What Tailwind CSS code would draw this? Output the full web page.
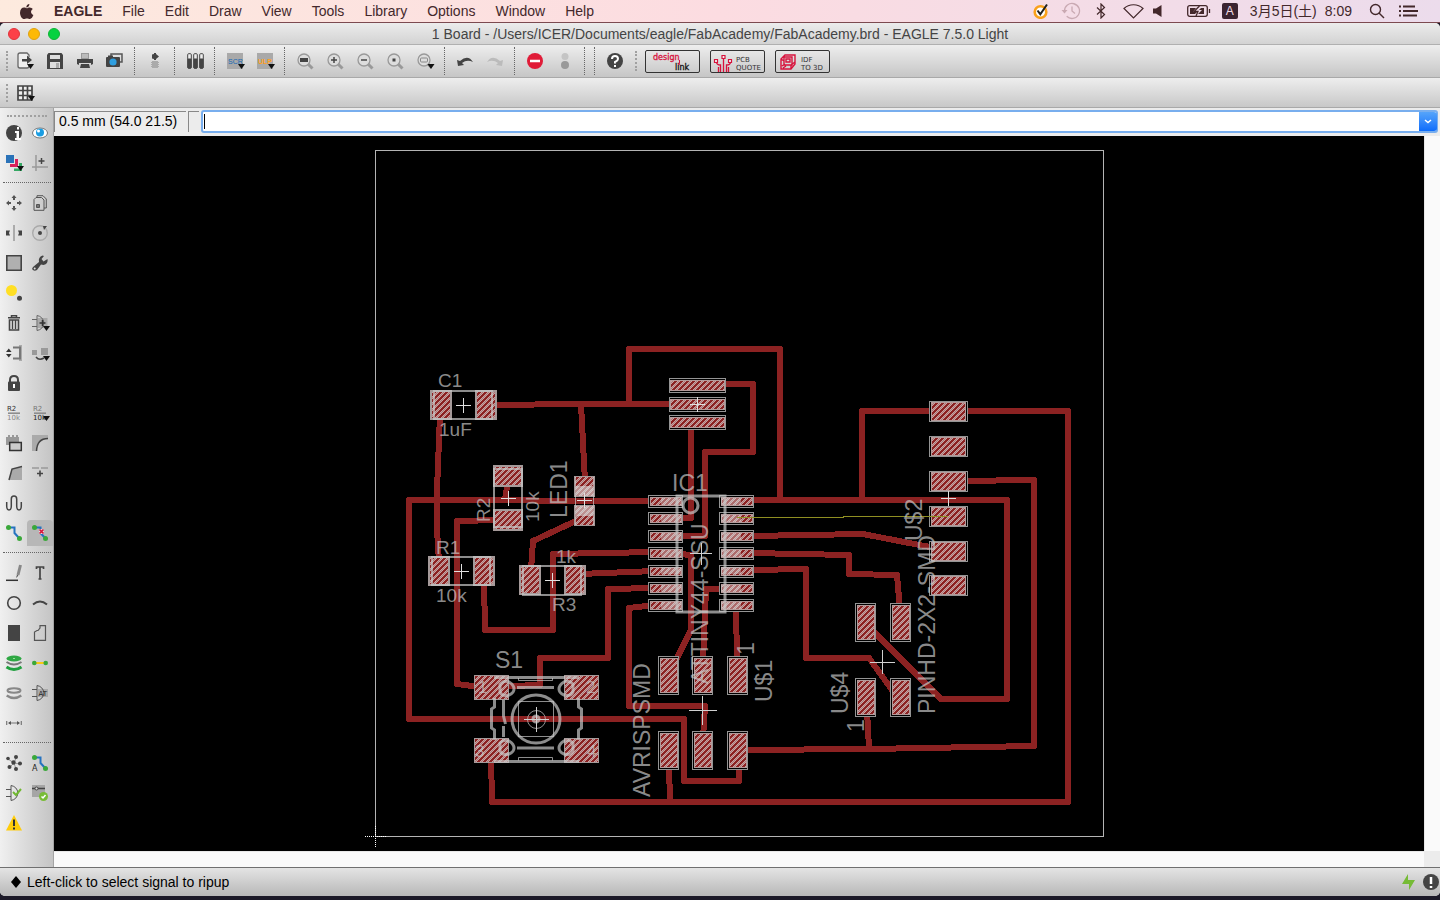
<!DOCTYPE html>
<html lang="en">
<head>
    <meta charset="UTF-8">
    <meta name="viewport" content="width=device-width, initial-scale=1.0">
    <title>1 Board - FabAcademy.brd - EAGLE 7.5.0 Light</title>
    <script src="https://cdn.jsdelivr.net/npm/@tailwindcss/browser@4"></script>
</head>
<body class="h-screen flex flex-col overflow-hidden bg-[#1c1a28] font-['Liberation_Sans','Noto_Sans_CJK_JP',sans-serif] text-black">

    <!-- Menu bar -->
    <header class="h-[23px] shrink-0 flex items-center justify-between border-b border-[#7c4a50] bg-linear-to-r from-[#fdeade] via-[#fcdce1] to-[#ecdcec] text-sm text-[#43282b] whitespace-nowrap">
        <nav class="flex items-center gap-5 pl-[19px]" aria-label="Menu bar">
            <a href="#" aria-label="Apple"><svg class="w-[15px] h-[17px]" viewBox="0 0 15 17" fill="currentColor"><path d="M10.4 1c.1 1.900-1.400 3.400-3.100 3.500C7.100 2.700 8.700 1.100 10.400 1zM7.700 5.300c.6 0 1.500-.8 2.900-.8 1.500 0 2.600.8 3.200 1.600-2.600 1.600-2.100 5 .6 6-.6 1.700-2 4-3.500 4-1.200 0-1.500-.7-2.900-.7s-1.900.7-3 .7C3.200 16.100 1 12.900 1 9.700c0-3.200 2-5.100 4-5.100 1.300 0 2.100.7 2.700.7z"/></svg></a>
            <a href="#" class="font-bold">EAGLE</a>
            <a href="#">File</a>
            <a href="#">Edit</a>
            <a href="#">Draw</a>
            <a href="#">View</a>
            <a href="#">Tools</a>
            <a href="#">Library</a>
            <a href="#">Options</a>
            <a href="#">Window</a>
            <a href="#">Help</a>
        </nav>
        <div class="flex items-center pr-[22px]">
            <svg class="w-4 h-4 mr-3" viewBox="0 0 16 16" fill="none"><circle cx="7.5" cy="9" r="5.8" fill="#fff" stroke="#f9a11b" stroke-width="2.6"/><path d="M4.5 7.5l2.800 3.700L14 1.500" stroke="#222" stroke-width="2"/></svg>
            <svg class="w-5 h-5 mr-[15px]" viewBox="0 0 20 20" fill="none" stroke="#c9a9b2" stroke-width="1.3"><path d="M3.5 10a7.500 7.500 0 1 1 2.200 5.300M11 5.500V10l3 2.500"/><path d="M.5 9h6L3.500 12.500z" fill="#c9a9b2" stroke="none"/></svg>
            <svg class="w-[10px] h-4 mr-[17px]" viewBox="0 0 10 16" fill="none" stroke="currentColor" stroke-width="1.2"><path d="M1 4.500l7.500 7L5 15V1l3.500 3.500L1 11.500"/></svg>
            <svg class="w-[21px] h-4 mr-[9px]" viewBox="0 0 21 16" fill="none" stroke="currentColor" stroke-width="1.2"><path d="M1 5.500C6 .5 15 .5 20 5.500L10.500 15z"/></svg>
            <svg class="w-[10px] h-3 mr-6" viewBox="0 0 10 12" fill="currentColor"><path d="M0 3.500h3L8.500 0v12L3 8.500H0z"/></svg>
            <svg class="w-6 h-3 mr-[11px]" viewBox="0 0 24 12" fill="none" stroke="currentColor"><rect x=".7" y=".7" width="19.6" height="10.6" rx="2" stroke-width="1.3"/><path d="M3 3h6L6 7h4l-2 2H3zM14 3h3v6h-6l4-4h-3z" fill="currentColor" stroke="none"/><path d="M12.5 1L7 6.500h4L9 11M22.500 4v4" stroke-width="1.3"/></svg>
            <span class="w-4 h-4 mr-3 rounded-[2px] bg-[#3b2430] text-[#f2dce4] text-xs leading-4 text-center">A</span>
            <span class="mr-2">3月5日(土)</span>
            <span class="mr-[17px]">8:09</span>
            <svg class="w-4 h-4 mr-[14px]" viewBox="0 0 16 16" fill="none" stroke="currentColor" stroke-width="1.4"><circle cx="6.5" cy="6.5" r="5"/><path d="M10 10l5 5"/></svg>
            <svg class="w-[19px] h-3" viewBox="0 0 19 12" stroke="currentColor" stroke-width="2"><path d="M0 1.500h2M0 6h2M0 10.500h2M4 1.500h12M4 6h15M4 10.500h14"/></svg>
        </div>
    </header>

    <div class="flex-1 min-h-0 flex flex-col rounded-t-[5px] rounded-b-[5px] overflow-hidden mb-1 bg-[#ececec]">
        <!-- Title bar -->
        <div class="h-[22px] shrink-0 relative flex items-center pl-2 gap-2 border-b border-[#b0b0b0] bg-linear-to-b from-[#ececec] to-[#d3d3d3]">
            <button aria-label="Close" class="w-3 h-3 rounded-full bg-[#fc4048] border border-[#e0343c]"></button>
            <button aria-label="Minimize" class="w-3 h-3 rounded-full bg-[#fdb905] border border-[#dfa012]"></button>
            <button aria-label="Zoom" class="w-3 h-3 rounded-full bg-[#06d240] border border-[#10b335]"></button>
            <h1 class="absolute inset-x-0 text-center text-sm leading-5 text-[#444] pointer-events-none">1 Board - /Users/ICER/Documents/eagle/FabAcademy/FabAcademy.brd - EAGLE 7.5.0 Light</h1>
        </div>

        <!-- Main toolbar -->
        <div class="h-[33px] shrink-0 flex items-center pl-[6px] border-b border-[#a9a9a9] bg-linear-to-b from-[#eeeeee] to-[#c6c6c6] [&>button]:flex [&>button]:items-center [&>button]:justify-center [&>button]:h-full [&>button]:w-[30px] [&>hr]:ml-[4px] [&>hr]:mr-[5px] [&>hr]:w-0 [&>hr]:h-[28px] [&>hr]:border-0 [&>hr]:border-l [&>hr]:border-dotted [&>hr]:border-[#666] [&_svg]:overflow-visible">
            <span class="w-1 h-[20px] border-l-2 border-dotted border-[#a0a0a0]"></span>
            <button aria-label="Open"><svg width="18" height="18" viewBox="0 0 18 18" fill="none"><path d="M13 5V3L11 1H4Q2 1 2 3v11q0 2 2 2h7q2 0 2-2v-2" stroke="#666" stroke-width="1.3" fill="#eee"/><path d="M6 7h5V3.500L16 8l-5 4V9.500H6z" fill="#444"/><path d="M11 12h7l-3.500 5z" fill="#111"/></svg></button>
            <button aria-label="Save"><svg width="16" height="16" viewBox="0 0 16 16"><path d="M1.500 0h13L16 2v14H0V2z" fill="#444"/><path d="M3 2h10v4H3zM3 9h10v6H3z" fill="#ddd"/><path d="M9 10h3v5H9z" fill="#aaa"/></svg></button>
            <button aria-label="Print"><svg width="16" height="16" viewBox="0 0 16 16"><path d="M4 0h8v6H4z" fill="#999"/><path d="M5 2h6M5 4h6" stroke="#ddd"/><path d="M0 6h16v5l-2 1v-2H2v2l-2-1z" fill="#444"/><path d="M4 11h8l1 4H3z" fill="#444"/></svg></button>
            <button aria-label="CAM processor"><svg width="18" height="16" viewBox="0 0 18 16"><path d="M5 3V1h11v8h-2" fill="none" stroke="#555" stroke-width="1.5"/><rect x="0" y="4" width="14" height="10" rx="1" fill="#444"/><path d="M2 2.500h5V5H2z" fill="#444"/><circle cx="7" cy="9" r="3.6" fill="#2f9fe0"/></svg></button>
            <hr>
            <button aria-label="Schematic"><svg width="10" height="16" viewBox="0 0 10 16"><path d="M4 0h2v1l3 2.500L6 6v1H4V6L2 5.500v-4L4 1z" fill="#444"/><path d="M2 8h6v1h1v1H8v1h1v1H8v1h1v1H8v1H2v-1H1v-1h1v-1H1v-1h1v-1H1V9h1z" fill="#aaa"/></svg></button>
            <hr>
            <button aria-label="Use library"><svg width="17" height="16" viewBox="0 0 17 16" fill="#eee" stroke="#444"><rect x=".7" y=".7" width="3.6" height="14.6" rx="1"/><rect x="6.7" y=".7" width="3.6" height="14.6" rx="1"/><rect x="12.7" y=".7" width="3.6" height="14.6" rx="1"/><path d="M1 6h3v9H1zM7 6h3v9H7zM13 6h3v9h-3z" fill="#444"/></svg></button>
            <hr>
            <button aria-label="Execute script"><svg width="17" height="16" viewBox="0 0 17 16"><path d="M0 0h16v16H0z" fill="#a9a9a9"/><text x="1" y="11" font-family="Liberation Sans" font-size="7" fill="#1468b4">SCR</text><path d="M11 11h7l-3.500 5z" fill="#111"/></svg></button>
            <button aria-label="Run ULP"><svg width="17" height="16" viewBox="0 0 17 16"><path d="M0 0h16v16H0z" fill="#a9a9a9"/><text x="1" y="11" font-family="Liberation Sans" font-size="7" font-weight="bold" fill="#ffa01c">ULP</text><path d="M11 11h7l-3.500 5z" fill="#111"/></svg></button>
            <hr>
            <button aria-label="Zoom to fit"><svg width="16" height="16" viewBox="0 0 16 16" fill="none"><path d="M10.500 10.500l5 5" stroke="#999" stroke-width="3"/><circle cx="7" cy="7" r="6" fill="#ddd" stroke="#999" stroke-width="1.3"/><path d="M3 5h8v4H3z" fill="#444"/></svg></button>
            <button aria-label="Zoom in"><svg width="16" height="16" viewBox="0 0 16 16" fill="none"><path d="M10.500 10.500l5 5" stroke="#999" stroke-width="3"/><circle cx="7" cy="7" r="6" fill="#ddd" stroke="#999" stroke-width="1.3"/><path d="M7 4v6M4 7h6" stroke="#444" stroke-width="1.5"/></svg></button>
            <button aria-label="Zoom out"><svg width="16" height="16" viewBox="0 0 16 16" fill="none"><path d="M10.500 10.500l5 5" stroke="#999" stroke-width="3"/><circle cx="7" cy="7" r="6" fill="#ddd" stroke="#999" stroke-width="1.3"/><path d="M4 7h6" stroke="#444" stroke-width="1.5"/></svg></button>
            <button aria-label="Redraw"><svg width="16" height="16" viewBox="0 0 16 16" fill="none"><path d="M10.500 10.500l5 5" stroke="#999" stroke-width="3"/><circle cx="7" cy="7" r="6" fill="#ddd" stroke="#999" stroke-width="1.3"/><path d="M5.500 5.500h3v3h-3z" fill="#444"/></svg></button>
            <button aria-label="Zoom select"><svg width="16" height="16" viewBox="0 0 16 16" fill="none"><path d="M10.500 10.500l4 4" stroke="#999" stroke-width="3"/><circle cx="7" cy="7" r="6" fill="#ddd" stroke="#999" stroke-width="1.3"/><rect x="3.5" y="5" width="7" height="4" rx="1" stroke="#888"/><path d="M10.500 11h7L14 16z" fill="#111"/></svg></button>
            <hr>
            <button aria-label="Undo"><svg width="16" height="12" viewBox="0 0 16 12"><path d="M0 5l1 6 6-1-2-2q5-4 11-1Q11-1 3 6z" fill="#444"/></svg></button>
            <button aria-label="Redo"><svg width="16" height="12" viewBox="0 0 16 12"><path d="M16 5l-1 6-6-1 2-2Q6 4 0 7 5-1 13 6z" fill="#bbb"/></svg></button>
            <hr>
            <button aria-label="Stop"><svg width="16" height="16" viewBox="0 0 16 16"><circle cx="8" cy="8" r="8" fill="#e01c38"/><path d="M3 6.700h10v2.600H3z" fill="#fff"/></svg></button>
            <button aria-label="Go"><svg width="8" height="16" viewBox="0 0 8 16"><circle cx="4" cy="3.5" r="3.5" fill="#c4c4c4"/><circle cx="4" cy="12" r="4" fill="#999"/></svg></button>
            <hr>
            <hr>
            <button aria-label="Help"><svg width="16" height="16" viewBox="0 0 16 16"><circle cx="8" cy="8" r="8" fill="#444"/><path d="M5 6q0-3 3-3t3 3q0 1.500-3 3v1.500M8 12v2" fill="none" stroke="#fff" stroke-width="2"/></svg></button>
            <span class="w-1 h-[20px] ml-[5px] mr-[6px] border-l-2 border-dotted border-[#a0a0a0]"></span>
            <div class="flex gap-[10px] [&>button]:w-[55px] [&>button]:h-[23px] [&>button]:border [&>button]:border-[#333] [&>button]:rounded-[2px]">
                <button aria-label="Design link"><svg width="53" height="21" viewBox="0 0 53 21" font-family="DejaVu Sans" font-size="8"><text x="7" y="9" fill="#d8123c" stroke="#d8123c" stroke-width=".3">design</text><text x="29" y="19" fill="#111" stroke="#111" stroke-width=".3">link</text><path d="M33.500 9v3" stroke="#d8123c"/><circle cx="33" cy="13" r="1" fill="#d8123c"/></svg></button>
                <button aria-label="PCB quote"><svg width="53" height="21" viewBox="0 0 53 21" font-family="DejaVu Sans" font-size="7" fill="#333"><path d="M12.500 8v13M9.500 21v-7q-4 0-4-3M15.500 21v-7q4 0 4-3M7.500 21v-5M17.500 21v-5" fill="none" stroke="#d8123c" stroke-width="1.3"/><path d="M3.500 8.500h3v3h-3zM11 4.500h3v3h-3zM17.500 8.500h3v3h-3z" fill="#eee" stroke="#d8123c" stroke-width="1.2"/><text x="25" y="11">PCB</text><text x="25" y="19">QUOTE</text></svg></button>
                <button aria-label="IDF to 3D"><svg width="53" height="21" viewBox="0 0 53 21" font-family="DejaVu Sans" font-size="7" fill="#333"><path d="M5 8l4-4h10v9l-4 5H5zM5 8l3 2M8 6h8v8H8zM10 8h4v3h-4zM6 15l3-2M7 17l3-2M15 18v-4l4-3" fill="none" stroke="#d8123c" stroke-width="1.4"/><text x="25" y="11">IDF</text><text x="25" y="19">TO 3D</text></svg></button>
            </div>
        </div>

        <!-- Parameter toolbar -->
        <div class="h-[30px] shrink-0 flex items-center pl-[6px] border-b border-[#a9a9a9] bg-linear-to-b from-[#eeeeee] to-[#c8c8c8]">
            <span class="w-1 h-[18px] border-l-2 border-dotted border-[#a0a0a0]"></span>
            <button aria-label="Grid" class="w-[31px] flex justify-center"><svg width="18" height="16" viewBox="0 0 18 16"><path d="M1 1h14v14H1zM6 1v14M10.500 1v14M1 5.500h14M1 10.500h14" fill="#eee" stroke="#444" stroke-width="1.7"/><path d="M11 11h7l-3.500 5z" fill="#111"/></svg></button>
        </div>

        <div class="flex-1 min-h-0 flex">
            <!-- Command buttons -->
            <aside class="w-[54px] shrink-0 pl-px pt-[7px] border-r border-[#a4a4a4] bg-linear-to-r from-[#f0f0f0] to-[#c4c4c4] [&>div]:grid [&>div]:grid-cols-2 [&_button]:flex [&_button]:items-center [&_button]:justify-center [&_button]:h-[30px] [&>hr]:mx-[2px] [&>hr]:mt-[4px] [&>hr]:mb-[5px] [&>hr]:border-0 [&>hr]:border-t [&>hr]:border-dotted [&>hr]:border-[#666] [&_svg]:overflow-visible [&_svg]:w-4 [&_svg]:h-4">
                <span class="block mx-[6px] h-[3px] border-t-2 border-dotted border-[#a0a0a0]"></span>
                <div>
                    <button aria-label="Info"><svg viewBox="0 0 16 16"><circle cx="8" cy="8" r="8" fill="#444"/><path d="M11 2h2v2.500h-2zM9 6h4v7h2v2H9v-2h1.500V8H9z" fill="#fff"/></svg></button>
                    <button aria-label="Show"><svg viewBox="0 0 16 16"><ellipse cx="8" cy="8" rx="7.5" ry="5" fill="#fff" stroke="#777"/><circle cx="8" cy="7.5" r="4" fill="#1b9de2"/><circle cx="6.5" cy="6" r="1.5" fill="#fff"/></svg></button>
                    <button aria-label="Display"><svg viewBox="0 0 16 16"><path d="M0 0h8v8H0z" fill="#2a72b8"/><path d="M12 4v8H4V9h5V4z" fill="#d8205a"/><path d="M16 8v8H8v-2.500h5V8z" fill="#35a864"/><path d="M11 11h7l-3.500 5z" fill="#111"/></svg></button>
                    <button aria-label="Mark"><svg viewBox="0 0 16 16"><path d="M4 0v16M0 12h16" stroke="#999" stroke-width="1.5"/><path d="M9.500 3v6M6.500 6h6" stroke="#444" stroke-width="1.5"/></svg></button>
                </div>
                <hr>
                <div>
                    <button aria-label="Move"><svg viewBox="0 0 16 16" fill="#555"><path d="M8 0l2.500 3H9v2H7V3H5.500zM8 16l-2.500-3H7v-2h2v2h1.500zM0 8l3-2.500V7h2v2H3v1.500zM16 8l-3-2.500V7h-2v2h2v1.500z"/></svg></button>
                    <button aria-label="Copy"><svg viewBox="0 0 16 16" fill="none" stroke="#555"><path d="M5 2V.7h6L14.300 4v9H12"/><path d="M4 2.500h5.500L12 5v10.300H2V4.500z"/><path d="M4.500 9.500h3v3h-3z" fill="#777"/></svg></button>
                    <button aria-label="Mirror"><svg viewBox="0 0 16 16"><path d="M8 0v16" stroke="#999" stroke-width="1.5"/><path d="M0 5.500h4L3 8l1 2.500H0zM16 5.500h-4L13 8l-1 2.500h4z" fill="#444"/></svg></button>
                    <button aria-label="Rotate"><svg viewBox="0 0 16 16"><circle cx="8" cy="8" r="7.3" fill="none" stroke="#aaa" stroke-width="1.4"/><circle cx="8" cy="8" r="2" fill="#444"/><path d="M11 1h4l-3 4z" fill="#444"/></svg></button>
                    <button aria-label="Group"><svg viewBox="0 0 16 16"><path d="M.8.800h14.400v14.400H.8z" fill="#b0b0b0" stroke="#444" stroke-width="1.6"/></svg></button>
                    <button aria-label="Change"><svg viewBox="0 0 16 16"><path d="M1 12l6-5Q6 2 10.500.5L12 1 9.500 4l2 2.500L15.500 4q1 5-4 6L9 9.500 5 15q-3 2-5-1z" fill="#444"/><circle cx="2.7" cy="13.4" r="1" fill="#ddd"/></svg></button>
                    <button aria-label="Paste"><svg viewBox="0 0 16 16"><circle cx="5.5" cy="5.5" r="5.5" fill="#ffdf25"/><circle cx="13.5" cy="13.3" r="2.5" fill="#444"/></svg></button>
                    <span></span>
                    <button aria-label="Delete"><svg viewBox="0 0 16 16" fill="none" stroke="#444"><path d="M5.500 2V.7h5V2M2 2.700h12" stroke-width="1.5"/><path d="M3.500 5v10h9V5z" stroke-width="1.6"/><path d="M6.500 5v9M9.500 5v9" stroke-width="1.4"/></svg></button>
                    <button aria-label="Add"><svg viewBox="0 0 16 16" fill="none"><path d="M5.500 3h10v10h-10z" fill="#aaa"/><path d="M0 4.500h5M0 11.500h5M5 .5v15Q11 14.500 12 8 11 1.500 5 .5" stroke="#666"/><path d="M10.500 5v6M7.500 8h6" stroke="#333" stroke-width="1.5"/><path d="M11 11h7l-3.500 5z" fill="#111"/></svg></button>
                    <button aria-label="Pinswap"><svg viewBox="0 0 16 16"><path d="M0 7l2.800-3.500L5.600 7zM0 9l2.800 3.500L5.600 9z" fill="#333"/><path d="M13 0h3v16h-3z" fill="#aaa"/><path d="M7 2.500h7v11H7" fill="none" stroke="#777" stroke-width="2"/></svg></button>
                    <button aria-label="Replace"><svg viewBox="0 0 16 16"><path d="M0 5h5v5H0zM9 3h7v7H9z" fill="#999"/><path d="M4 12q3 4 8 1" fill="none" stroke="#444" stroke-width="1.5"/><path d="M11 11h7l-3.500 5z" fill="#111"/></svg></button>
                    <button aria-label="Lock"><svg viewBox="0 0 16 16"><path d="M4 8V5q0-4 4-4t4 4v3" fill="none" stroke="#444" stroke-width="2"/><rect x="2" y="6.5" width="12" height="9.5" rx="1" fill="#444"/><path d="M7 9h2v4H7z" fill="#fff"/></svg></button>
                    <span></span>
                    <button aria-label="Name"><svg viewBox="0 0 16 16" font-family="DejaVu Sans" font-size="7"><text x="1" y="6" fill="#333">R2</text><path d="M2 8.200h12" stroke="#888" stroke-width="1.5"/><text x="1" y="15" fill="#888">10k</text></svg></button>
                    <button aria-label="Value"><svg viewBox="0 0 16 16" font-family="DejaVu Sans" font-size="7"><text x="1" y="6" fill="#777">R2</text><path d="M2 8.200h12" stroke="#888" stroke-width="1.5"/><text x="1" y="15" fill="#222">10k</text><path d="M11 11h7l-3.500 5z" fill="#111"/></svg></button>
                    <button aria-label="Smash"><svg viewBox="0 0 16 16"><path d="M0 2h2V0h2v2h2V0h2v2h2V0h2v2h1v8H0z" fill="#999"/><path d="M3.700 7.500h11.600v8H3.700z" fill="#ccc" stroke="#333" stroke-width="1.5"/></svg></button>
                    <button aria-label="Miter"><svg viewBox="0 0 16 16"><path d="M0 0h16v3Q4 4 4 16H0z" fill="#aaa"/><path d="M16 3.500Q5 3.500 4.500 16" fill="none" stroke="#444" stroke-width="1.5"/></svg></button>
                    <button aria-label="Split"><svg viewBox="0 0 16 16"><path d="M6 4l10-2v13H3z" fill="#aaa"/><path d="M16 1.500L6 4 3 15" fill="none" stroke="#444" stroke-width="1.5"/></svg></button>
                    <button aria-label="Optimize"><svg viewBox="0 0 16 16"><path d="M0 3h7M9 3h7" stroke="#999" stroke-width="1.5"/><path d="M8 5.500v6M5 8.500h6" stroke="#444" stroke-width="1.6"/></svg></button>
                    <button aria-label="Meander"><svg viewBox="0 0 16 16"><path d="M.7 7v4q0 4 2.300 4t2.300-4V4Q5.300 1 8 1t2.700 3v7q0 4 2.300 4t2.300-4V7" fill="none" stroke="#444" stroke-width="1.5"/></svg></button>
                    <span></span>
                    <button aria-label="Route"><svg viewBox="0 0 16 16"><path d="M2 2.500h6.500V8l5.500 6" fill="none" stroke="#2573c0" stroke-width="2"/><circle cx="2.5" cy="2.5" r="2.5" fill="#3aa83a"/><circle cx="13.5" cy="13.5" r="2.5" fill="#3aa83a"/></svg></button>
                    <button aria-label="Ripup" aria-pressed="true" class="my-[2px] h-[26px]! bg-[#b7b7b7] rounded-t-[4px]"><svg viewBox="0 0 16 16"><path d="M2 2.500h6.500V8l5.500 6" fill="none" stroke="#2573c0" stroke-width="2"/><circle cx="2.5" cy="2.5" r="2.5" fill="#3aa83a"/><circle cx="13.5" cy="13.5" r="2.5" fill="#3aa83a"/><path d="M7 4h5v5H7z" fill="#ddd"/><path d="M7.500 4.500l4 4M11.500 4.500l-4 4" stroke="#d8123c" stroke-width="1.7"/></svg></button>
                </div>
                <hr>
                <div>
                    <button aria-label="Line"><svg viewBox="0 0 16 16"><path d="M0 15.300h12" stroke="#333" stroke-width="1.5"/><path d="M14.500 0L12 10" stroke="#888" stroke-width="3"/><path d="M10 13l1-3 1.500.5z" fill="#444"/></svg></button>
                    <button aria-label="Text"><svg viewBox="0 0 16 16"><path d="M4.500 4V2h7v2M8 2v12M6.500 14h3" fill="none" stroke="#444" stroke-width="1.7"/></svg></button>
                    <button aria-label="Circle"><svg viewBox="0 0 16 16"><circle cx="8" cy="8" r="6.3" fill="none" stroke="#444" stroke-width="1.6"/></svg></button>
                    <button aria-label="Arc"><svg viewBox="0 0 16 16"><path d="M1 9.500q7-6 14 0" fill="none" stroke="#444" stroke-width="2"/></svg></button>
                    <button aria-label="Rect"><svg viewBox="0 0 16 16"><path d="M2 0h12v16H2z" fill="#444"/></svg></button>
                    <button aria-label="Polygon"><svg viewBox="0 0 16 16"><path d="M8 .7h5.500v14.600h-11V7L5 5.500h1L8 3z" fill="none" stroke="#555" stroke-width="1.2"/></svg></button>
                    <button aria-label="Via"><svg viewBox="0 0 16 16" fill="none"><path d="M.5 12q7.500 5 15 0" stroke="#22a040" stroke-width="3"/><path d="M.5 7q7.500 5 15 0" stroke="#777" stroke-width="2"/><ellipse cx="8" cy="3.5" rx="7.5" ry="3" fill="#2fa844"/><path d="M7 3.500h2" stroke="#9d9"/></svg></button>
                    <button aria-label="Signal"><svg viewBox="0 0 16 16"><path d="M2 8h12" stroke="#f8c815" stroke-width="2"/><circle cx="2.3" cy="8" r="2.3" fill="#3aa83a"/><circle cx="13.7" cy="8" r="2.3" fill="#3aa83a"/></svg></button>
                    <button aria-label="Hole"><svg viewBox="0 0 16 16" fill="none"><path d="M.7 10.500q7.300 5 14.600 0" stroke="#888" stroke-width="2.5"/><ellipse cx="8" cy="5.5" rx="6.5" ry="2.2" stroke="#888" stroke-width="2"/></svg></button>
                    <button aria-label="Attribute"><svg viewBox="0 0 16 16"><path d="M6 4h10v8H6z" fill="#aaa"/><path d="M0 4.500h5M0 11.500h5M5 .5v15Q11 14.500 12 8 11 1.500 5 .5" stroke="#555" fill="none"/><text x="6.5" y="11" font-family="DejaVu Sans" font-size="7" fill="#222">AT</text></svg></button>
                    <button aria-label="Dimension"><svg viewBox="0 0 16 16"><path d="M.7 6v4M15.300 6v4M3 8h10" stroke="#777" stroke-width="1.2"/><path d="M2 8l3-2v4zM14 8l-3-2v4z" fill="#555"/></svg></button>
                    <span></span>
                </div>
                <hr>
                <div>
                    <button aria-label="Ratsnest"><svg viewBox="0 0 16 16"><path d="M2 4l6 4 2-5M4 12l4-4 6 1M8 8l2 6" stroke="#999" fill="none"/><g fill="#444"><circle cx="2" cy="3.5" r="1.8"/><circle cx="10" cy="2" r="2"/><circle cx="7.5" cy="7.5" r="2.2"/><circle cx="14" cy="8.5" r="2"/><circle cx="3.5" cy="12" r="2"/><circle cx="10" cy="14" r="2"/></g></svg></button>
                    <button aria-label="Autorouter"><svg viewBox="0 0 16 16"><path d="M2 2.500h6.500V8l5.500 6" fill="none" stroke="#2573c0" stroke-width="2"/><circle cx="2.5" cy="2.5" r="2.5" fill="#3aa83a"/><circle cx="13.5" cy="13.5" r="2.5" fill="#3aa83a"/><text x="0" y="16" font-family="DejaVu Sans" font-size="8" fill="#222">A</text></svg></button>
                    <button aria-label="ERC"><svg viewBox="0 0 16 16" fill="none"><path d="M0 4.500h5M0 11.500h5M5 .5v15Q11 14.500 12 8 11 1.500 5 .5" stroke="#555"/><path d="M7 7l3 3 5-6" stroke="#70b830" stroke-width="2"/></svg></button>
                    <button aria-label="DRC"><svg viewBox="0 0 16 16" fill="none"><path d="M0 0h13v12H0z" fill="#a5a5a5"/><path d="M0 3.500h13" stroke="#444" stroke-width="1.5"/><circle cx="4.5" cy="3.5" r="1.5" fill="#ddd" stroke="#444"/><circle cx="11.5" cy="11.5" r="4.5" fill="#78bc35"/><path d="M9.500 11.500L11 13l2.500-3" stroke="#fff" stroke-width="1.5"/></svg></button>
                    <button aria-label="Errors"><svg viewBox="0 0 16 16"><path d="M8 0l8 15.500H0z" fill="#ffcc0a"/><path d="M8 4.500V11M8 12.500v2" stroke="#333" stroke-width="2"/></svg></button>
                </div>
            </aside>

            <main class="flex-1 min-w-0 flex flex-col">
                <!-- Coordinates and command line -->
                <div class="h-[28px] shrink-0 flex items-start gap-[2px] pt-[2px] pr-[2px] bg-[#ececec]">
                    <output class="w-[132px] h-[21px] mt-px pl-1 border-t border-l border-[#888] text-sm leading-[19px] whitespace-nowrap">0.5 mm (54.0 21.5)</output>
                    <span class="w-[11px] h-[21px] mt-px border-t border-l border-[#888]"></span>
                    <div class="flex-1 h-[23px] flex border-2 border-[#78aeee] rounded-[3px] bg-white">
                        <span class="w-px h-[15px] mt-[2px] ml-px bg-black"></span>
                        <input aria-label="Command line" class="flex-1 min-w-0 px-1 text-sm outline-none">
                        <button aria-label="Command history" class="w-[18px] -mr-px flex items-center justify-center rounded-r-[3px] bg-linear-to-b from-[#55a4fa] to-[#0c6cfb]"><svg width="8" height="5" viewBox="0 0 8 5"><path d="M1 1l3 2.500L7 1" fill="none" stroke="#fff" stroke-width="1.5"/></svg></button>
                    </div>
                </div>

                <!-- Board, with its two scroll bar tracks -->
                <div class="flex-1 min-h-0 grid grid-cols-[1fr_16px] grid-rows-[minmax(0,1fr)_16px]">
                    <svg class="w-full h-full bg-black" viewBox="54 136 1370 715" role="img" aria-label="Board layout">
                        <defs>
                            <pattern id="hatch" width="6" height="6" patternUnits="userSpaceOnUse">
                                <rect width="6" height="6" fill="#8c2222"/>
                                <path d="M0 0h1v1H0zM5 1h1v1H5zM4 2h1v1H4zM3 3h1v1H3zM2 4h1v1H2zM1 5h1v1H1zM2 0h1v1H2zM1 1h1v1H1zM0 2h1v1H0zM5 3h1v1H5zM4 4h1v1H4zM3 5h1v1H3z" fill="#c4a2a2"/>
                                <path d="M1 0h1v1H1zM0 1h1v1H0zM5 2h1v1H5zM4 3h1v1H4zM3 4h1v1H3zM2 5h1v1H2z" fill="#b07878"/>
                            </pattern>
                            <g id="padV">
                                <rect x="-9.5" y="-18.5" width="20" height="38" fill="#000" stroke="#949494"/>
                                <rect x="-7.5" y="-16.5" width="17" height="34" fill="url(#hatch)" stroke="#b59a9a"/>
                            </g>
                            <g id="padH">
                                <rect x="-18.5" y="-9.5" width="38" height="20" fill="#000" stroke="#949494"/>
                                <rect x="-16.5" y="-8.5" width="34" height="18" fill="url(#hatch)" stroke="#b59a9a"/>
                            </g>
                            <g id="padReg">
                                <rect x="-27.5" y="-6.5" width="56" height="14" fill="#000" stroke="#949494"/>
                                <rect x="-26.5" y="-4.5" width="54" height="10" fill="url(#hatch)" stroke="#b59a9a"/>
                            </g>
                            <g id="pin">
                                <rect x="-16.5" y="-5.5" width="34" height="12" fill="#000" stroke="#949494"/>
                                <rect x="-14.5" y="-3.5" width="31" height="8" fill="url(#hatch)" stroke="#b59a9a"/>
                            </g>
                            <rect id="chipPad" x="-10" y="-14" width="20" height="28" fill="url(#hatch)" stroke="#a59a9a" stroke-width="2"/>
                            <rect id="chipPadH" x="-14" y="-10" width="28" height="20" fill="url(#hatch)" stroke="#a59a9a" stroke-width="2"/>
                            <rect id="switchPad" x="-16.5" y="-11.5" width="34" height="24" fill="url(#hatch)" stroke="#a59a9a"/>
                            <path id="origin" d="M-7 .5H8M.5-7V8" stroke="#e0e0e0" fill="none"/>
                        </defs>

                        <rect x="375.5" y="150.5" width="728" height="686" fill="none" stroke="#b4b4b4" shape-rendering="crispEdges"/>
                        <path d="M365 836.500h21M375.500 826v21" stroke="#fff" stroke-dasharray="1 1" shape-rendering="crispEdges"/>

                        <!-- Top copper -->
                        <g fill="none" stroke="#8c2222" stroke-width="6" stroke-linejoin="round" shape-rendering="crispEdges">
                            <path d="M490 405L580 404H675"/>
                            <path d="M440 415L437 490V530L439 562"/>
                            <path d="M655 501L409 500V719H684V781H739V765"/>
                            <path d="M500 520L457 521V684L480 687L540 685V658H608V589L655 588"/>
                            <path d="M508 480L505 500"/>
                            <path d="M581 404L585 482"/>
                            <path d="M580 519L533 541L531 570"/>
                            <path d="M484 580L485 630H553V554L655 552"/>
                            <path d="M580 574L655 571"/>
                            <path d="M629 404V349H780V500"/>
                            <path d="M720 384H753V452H705V536H680"/>
                            <path d="M691 425V518H680"/>
                            <path d="M680 554L691 555V630L675 662"/>
                            <path d="M725 589H706L703 662"/>
                            <path d="M655 605L629 608V706H705L703 738"/>
                            <path d="M736 605L737 662"/>
                            <path d="M750 500H1007V699H941L868 626"/>
                            <path d="M750 536L863 534L935 548"/>
                            <path d="M750 553L849 555V574L897 575L900 610"/>
                            <path d="M750 570L806 569V658H869L895 694"/>
                            <path d="M862 499V411H1068V802H492L491 755"/>
                            <path d="M960 481L1034 480V746L869 749L742 750"/>
                            <path d="M867 710L869 748"/>
                            <path d="M669 765L670 802"/>
                        </g>

                        <!-- Pads -->
                        <g shape-rendering="crispEdges">
                            <use href="#padReg" x="697" y="385"/>
                            <use href="#padReg" x="697" y="404"/>
                            <use href="#padReg" x="697" y="422"/>

                            <use href="#pin" x="665" y="501"/><use href="#pin" x="736" y="501"/>
                            <use href="#pin" x="665" y="518"/><use href="#pin" x="736" y="518"/>
                            <use href="#pin" x="665" y="536"/><use href="#pin" x="736" y="536"/>
                            <use href="#pin" x="665" y="553"/><use href="#pin" x="736" y="553"/>
                            <use href="#pin" x="665" y="571"/><use href="#pin" x="736" y="571"/>
                            <use href="#pin" x="665" y="588"/><use href="#pin" x="736" y="588"/>
                            <use href="#pin" x="665" y="605"/><use href="#pin" x="736" y="605"/>
                            <path d="M671 498V610M731 498V610" stroke="#dcdcdc" stroke-opacity=".4" stroke-width="20" stroke-dasharray="7 10.300"/>

                            <use href="#padH" x="948" y="411"/>
                            <use href="#padH" x="948" y="446"/>
                            <use href="#padH" x="948" y="481"/>
                            <use href="#padH" x="948" y="516"/>
                            <use href="#padH" x="948" y="551"/>
                            <use href="#padH" x="948" y="585"/>

                            <use href="#padV" x="668" y="675"/>
                            <use href="#padV" x="702" y="675"/>
                            <use href="#padV" x="737" y="675"/>
                            <use href="#padV" x="668" y="750"/>
                            <use href="#padV" x="702" y="750"/>
                            <use href="#padV" x="737" y="750"/>
                            <use href="#padV" x="865" y="622"/>
                            <use href="#padV" x="900" y="622"/>
                            <use href="#padV" x="865" y="697"/>
                            <use href="#padV" x="900" y="697"/>

                            <use href="#chipPad" x="441" y="405"/><use href="#chipPad" x="486" y="405"/>
                            <use href="#chipPad" x="439" y="571"/><use href="#chipPad" x="484" y="571"/>
                            <use href="#chipPad" x="530" y="580"/><use href="#chipPad" x="575" y="580"/>
                            <use href="#chipPadH" x="508" y="476"/><use href="#chipPadH" x="508" y="520"/>
                            <rect x="574.5" y="476.5" width="20" height="20" fill="url(#hatch)" stroke="#a59a9a"/>
                            <rect x="574.5" y="505.5" width="20" height="20" fill="url(#hatch)" stroke="#a59a9a"/>
                            <path d="M576 486h17v10h-17zM576 506h17v10h-17z" fill="#dcdcdc" fill-opacity=".6"/>

                            <use href="#switchPad" x="491" y="687"/>
                            <use href="#switchPad" x="581" y="687"/>
                            <use href="#switchPad" x="491" y="750"/>
                            <use href="#switchPad" x="581" y="750"/>
                        </g>

                        <path d="M737 517.500H843V516.500H948" fill="none" stroke="#8f8f22" shape-rendering="crispEdges"/>

                        <!-- Placement outlines -->
                        <g fill="none" stroke="#c8c8c8" stroke-opacity=".7" stroke-width="2">
                            <path d="M434 391h58v28h-58zM432 557h58v28h-58zM523 566h58v29h-58zM494 469h28v58h-28z"/>
                            <path d="M575.500 477v48M593.500 477v48" stroke-width="1"/>
                            <path d="M677 496h48v116h-48z" stroke-width="3"/>
                            <circle cx="690.5" cy="505.5" r="7.5" stroke-width="3"/>
                            <path d="M494 677.500h85M494 761.500h85" stroke-width="3"/>
                            <path d="M517 687.500h37M517 748h37" stroke-width="3"/>
                            <path d="M518.500 678v2.500h34V678M518.500 760.500v-3h34v3" stroke-width="1"/>
                            <path d="M494.500 698v9l-3 2v19l3 2v10M578.500 698v9l3 2v19l-3 2v10" stroke-width="3"/>
                            <path d="M503.500 700v16l2 8M503.500 726v11" stroke-width="3"/>
                            <circle cx="536" cy="719" r="24" stroke-width="3"/>
                            <rect x="518.5" y="701.5" width="35" height="35" stroke-width="1"/>
                            <circle cx="536.5" cy="719.5" r="9" stroke-width="1"/>
                            <circle cx="536" cy="719" r="3" stroke-width="3"/>
                            <path d="M500 684q4-4 9-2 5 3 5 7t-5 6q-7 2-9-3zM500 743q4-4 9-2 5 3 5 7t-5 6q-7 2-9-3zM573 684q-4-4-9-2-5 3-5 7t5 6q7 2 9-3zM573 743q-4-4-9-2-5 3-5 7t5 6q7 2 9-3z" stroke-width="3"/>
                        </g>

                        <!-- Names and values -->
                        <g fill="#c8c8c8" fill-opacity=".7" font-family="Liberation Sans, sans-serif" font-size="19">
                            <text x="438" y="387">C1</text>
                            <text x="439" y="436">1uF</text>
                            <text x="436" y="554">R1</text>
                            <text x="436" y="602">10k</text>
                            <text x="556" y="563">1k</text>
                            <text x="552" y="611">R3</text>
                            <text transform="translate(490 522) rotate(-90)">R2</text>
                            <text transform="translate(539 522) rotate(-90)">10k</text>
                            <g font-size="23">
                                <text x="672" y="491">IC1</text>
                                <text x="495" y="668">S1</text>
                                <text transform="translate(567 518) rotate(-90)">LED1</text>
                                <text transform="translate(708 684) rotate(-90)">ATTINY44-SSU</text>
                                <text transform="translate(650 797) rotate(-90)">AVRISPSMD</text>
                                <text transform="translate(772 702) rotate(-90)">U$1</text>
                                <text transform="translate(754 655) rotate(-90)">1</text>
                                <text transform="translate(848 714) rotate(-90)">U$4</text>
                                <text transform="translate(864 732) rotate(-90)">1</text>
                                <text transform="translate(922 541) rotate(-90)">U$2</text>
                                <text transform="translate(935 714) rotate(-90)">PINHD-2X2-SMD</text>
                            </g>
                            <g font-size="17">
                                <text x="478" y="693">1</text>
                                <text x="586" y="693">2</text>
                                <text x="475" y="757">3</text>
                                <text x="587" y="757">4</text>
                            </g>
                        </g>

                        <g shape-rendering="crispEdges">
                            <use href="#origin" x="463" y="405"/>
                            <use href="#origin" x="461" y="571"/>
                            <use href="#origin" x="552" y="580"/>
                            <use href="#origin" x="508" y="498"/>
                            <use href="#origin" x="584" y="500"/>
                            <use href="#origin" x="697" y="404"/>
                            <use href="#origin" x="948" y="498"/>
                            <path d="M690 553.500h22M701.500 543v22M689 710.500h28M702.500 696v29M870 662.500h25M882.500 650v24M524 719.500h25M536.500 707v25" stroke="#d0d0d0"/>
                        </g>
                    </svg>
                    <div class="bg-[#fafafa] border-l border-[#e8e8e8]"></div>
                    <div class="bg-[#fafafa] border-t border-[#e8e8e8]"></div>
                    <div class="bg-[#ececec]"></div>
                </div>
            </main>
        </div>

        <!-- Status bar -->
        <footer class="h-[29px] shrink-0 flex items-center pl-[10px] pr-px border-t border-[#707070] bg-linear-to-b from-[#e4e4e4] to-[#b8b8b8] text-sm">
            <svg width="12" height="12" viewBox="0 0 12 12"><path d="M6 0l5 6-5 6-5-6z"/></svg>
            <p class="ml-[5px]">Left-click to select signal to ripup</p>
            <svg class="ml-auto mr-2" width="13" height="16" viewBox="0 0 13 16"><path d="M6 0v6h7L7 16v-6H0z" fill="#76bb36"/></svg>
            <svg width="16" height="16" viewBox="0 0 16 16"><circle cx="8" cy="8" r="8" fill="#444"/><path d="M8 3v7M8 12v2" stroke="#fff" stroke-width="2.5"/></svg>
        </footer>
    </div>
</body>
</html>
